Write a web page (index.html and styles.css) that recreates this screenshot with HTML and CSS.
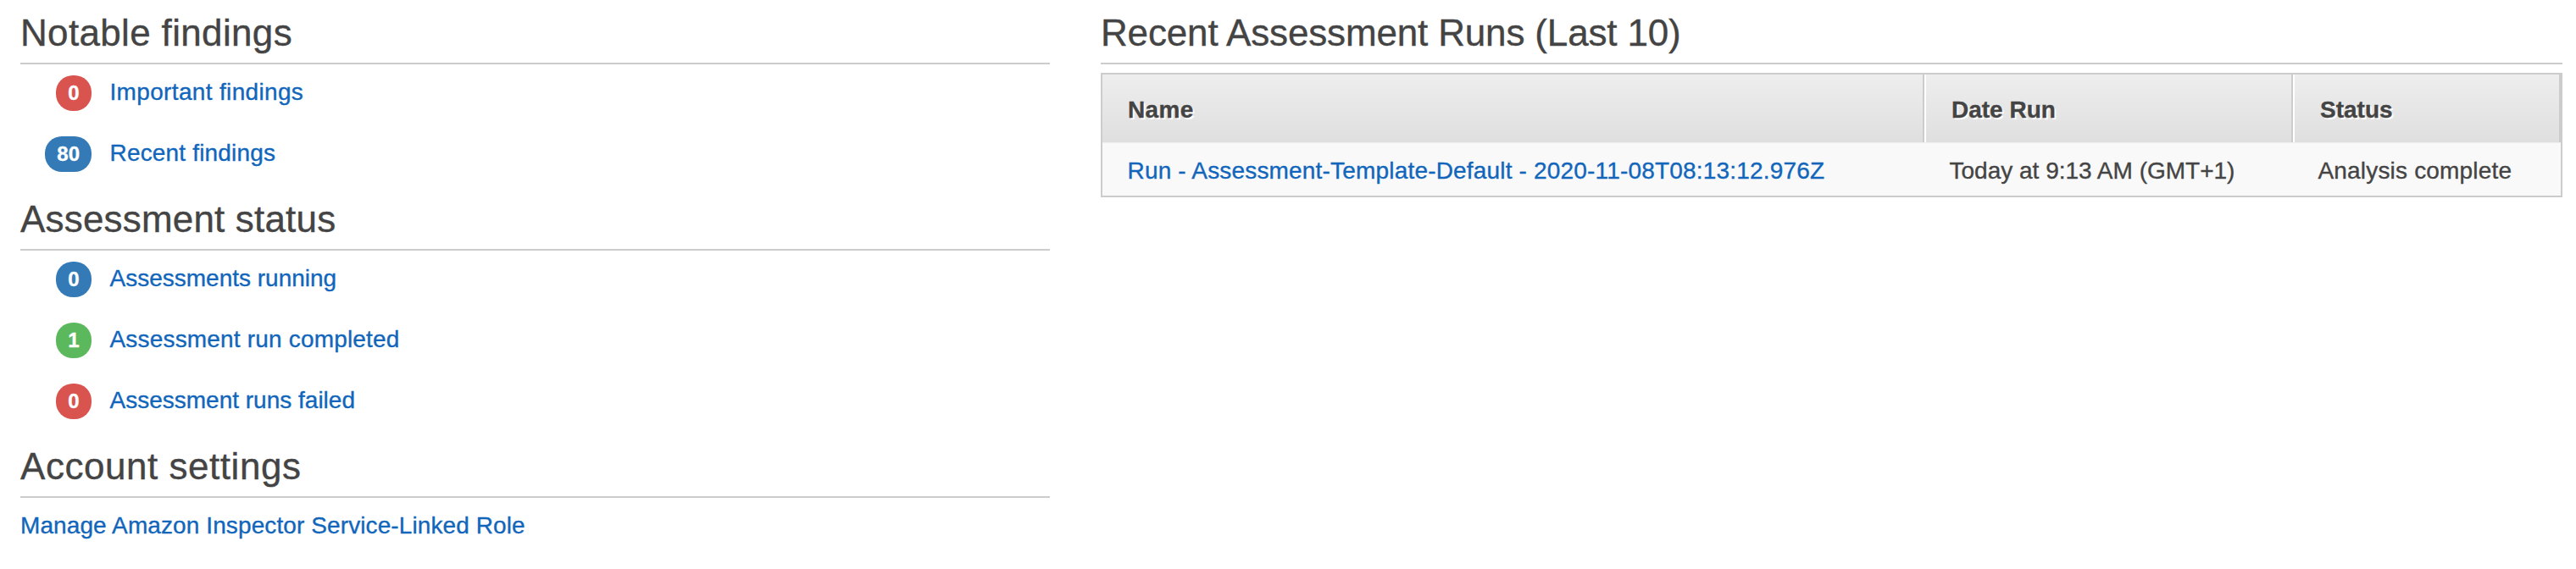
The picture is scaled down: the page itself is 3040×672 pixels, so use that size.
FILE: index.html
```html
<!DOCTYPE html>
<html lang="en">
<head>
<meta charset="utf-8">
<title>Inspector dashboard</title>
<link rel="stylesheet" href="styles.css">
</head>
<body>
<main class="dashboard">
  <div class="summary">
    <section class="panel">
      <h2 class="heading track-3">Notable findings</h2>
      <ul class="stats">
        <li class="stat"><span class="count"><span class="badge danger">0</span></span><a class="link track-3">Important findings</a></li>
        <li class="stat"><span class="count"><span class="badge info">80</span></span><a class="link track-2">Recent findings</a></li>
      </ul>
    </section>
    <section class="panel">
      <h2 class="heading track-2">Assessment status</h2>
      <ul class="stats">
        <li class="stat"><span class="count"><span class="badge info">0</span></span><a class="link">Assessments running</a></li>
        <li class="stat"><span class="count"><span class="badge success">1</span></span><a class="link track-2">Assessment run completed</a></li>
        <li class="stat"><span class="count"><span class="badge danger">0</span></span><a class="link">Assessment runs failed</a></li>
      </ul>
    </section>
    <section class="panel">
      <h2 class="heading track-5">Account settings</h2>
      <p class="setting"><a class="link track-1">Manage Amazon Inspector Service-Linked Role</a></p>
    </section>
  </div>
  <section class="runs">
    <h2 class="heading tight">Recent Assessment Runs (Last 10)</h2>
    <div class="table">
      <div class="row head">
        <div class="cell track-3">Name</div>
        <div class="cell">Date Run</div>
        <div class="cell">Status</div>
      </div>
      <div class="row body">
        <div class="cell"><a class="link track-2">Run - Assessment-Template-Default - 2020-11-08T08:13:12.976Z</a></div>
        <div class="cell">Today at 9:13 AM (GMT+1)</div>
        <div class="cell track-2">Analysis complete</div>
      </div>
    </div>
  </section>
</main>
</body>
</html>
```
FILE: styles.css
```css
* { box-sizing: border-box; }
body { margin: 0; background: #fff; color: #444; font: 28px/40px "Liberation Sans", Arial, sans-serif; -webkit-text-stroke: 0.35px currentColor; }
.dashboard { display: grid; grid-template-columns: 1215px 1725px; column-gap: 60px; padding: 0 16px 0 24px; }
.heading { height: 76px; margin: 0; padding-top: 14px; border-bottom: 2px solid #ccc; font-size: 44px; line-height: 50px; font-weight: 400; }
.stats { margin: 0; padding: 0; list-style: none; }
.stat { display: flex; height: 72px; padding-top: 13px; }
.count { width: 84px; margin-right: 21.5px; display: flex; justify-content: flex-end; }
.badge { min-width: 42px; height: 42px; padding: 0 14px; border-radius: 20px; color: #fff; font-size: 24px; line-height: 42px; font-weight: 700; text-align: center; }
.danger { background: #d9534f; }
.info { background: #337ab7; }
.success { background: #5cb85c; }
.link { color: #1166bb; }
.setting { margin: 0; padding-top: 13px; }

/* Letter tracking */
.tight { letter-spacing: -0.16px; }
.track-1 { letter-spacing: 0.1px; }
.track-2 { letter-spacing: 0.18px; }
.track-3 { letter-spacing: 0.34px; }
.track-5 { letter-spacing: 0.54px; }

.table { margin-top: 10px; border: 2px solid #ccc; }
.row { display: grid; grid-template-columns: 970px 435px 316px; }
.cell { padding-left: 29.5px; }
.head { height: 80px; background: linear-gradient(#eee, #dfdfdf); font-weight: 700; line-height: 76px; text-shadow: 2px 2px 0 #fff; }
.head .cell { height: 80px; padding-top: 4px; padding-left: 30px; border-right: 2px solid #ccc; }
.head .cell + .cell { border-left: 2px solid #fff; }
.body { height: 63px; border-top: 1px solid #eee; background: #f9f9f9; line-height: 66px; }
.body .cell { height: 62px; }
```
